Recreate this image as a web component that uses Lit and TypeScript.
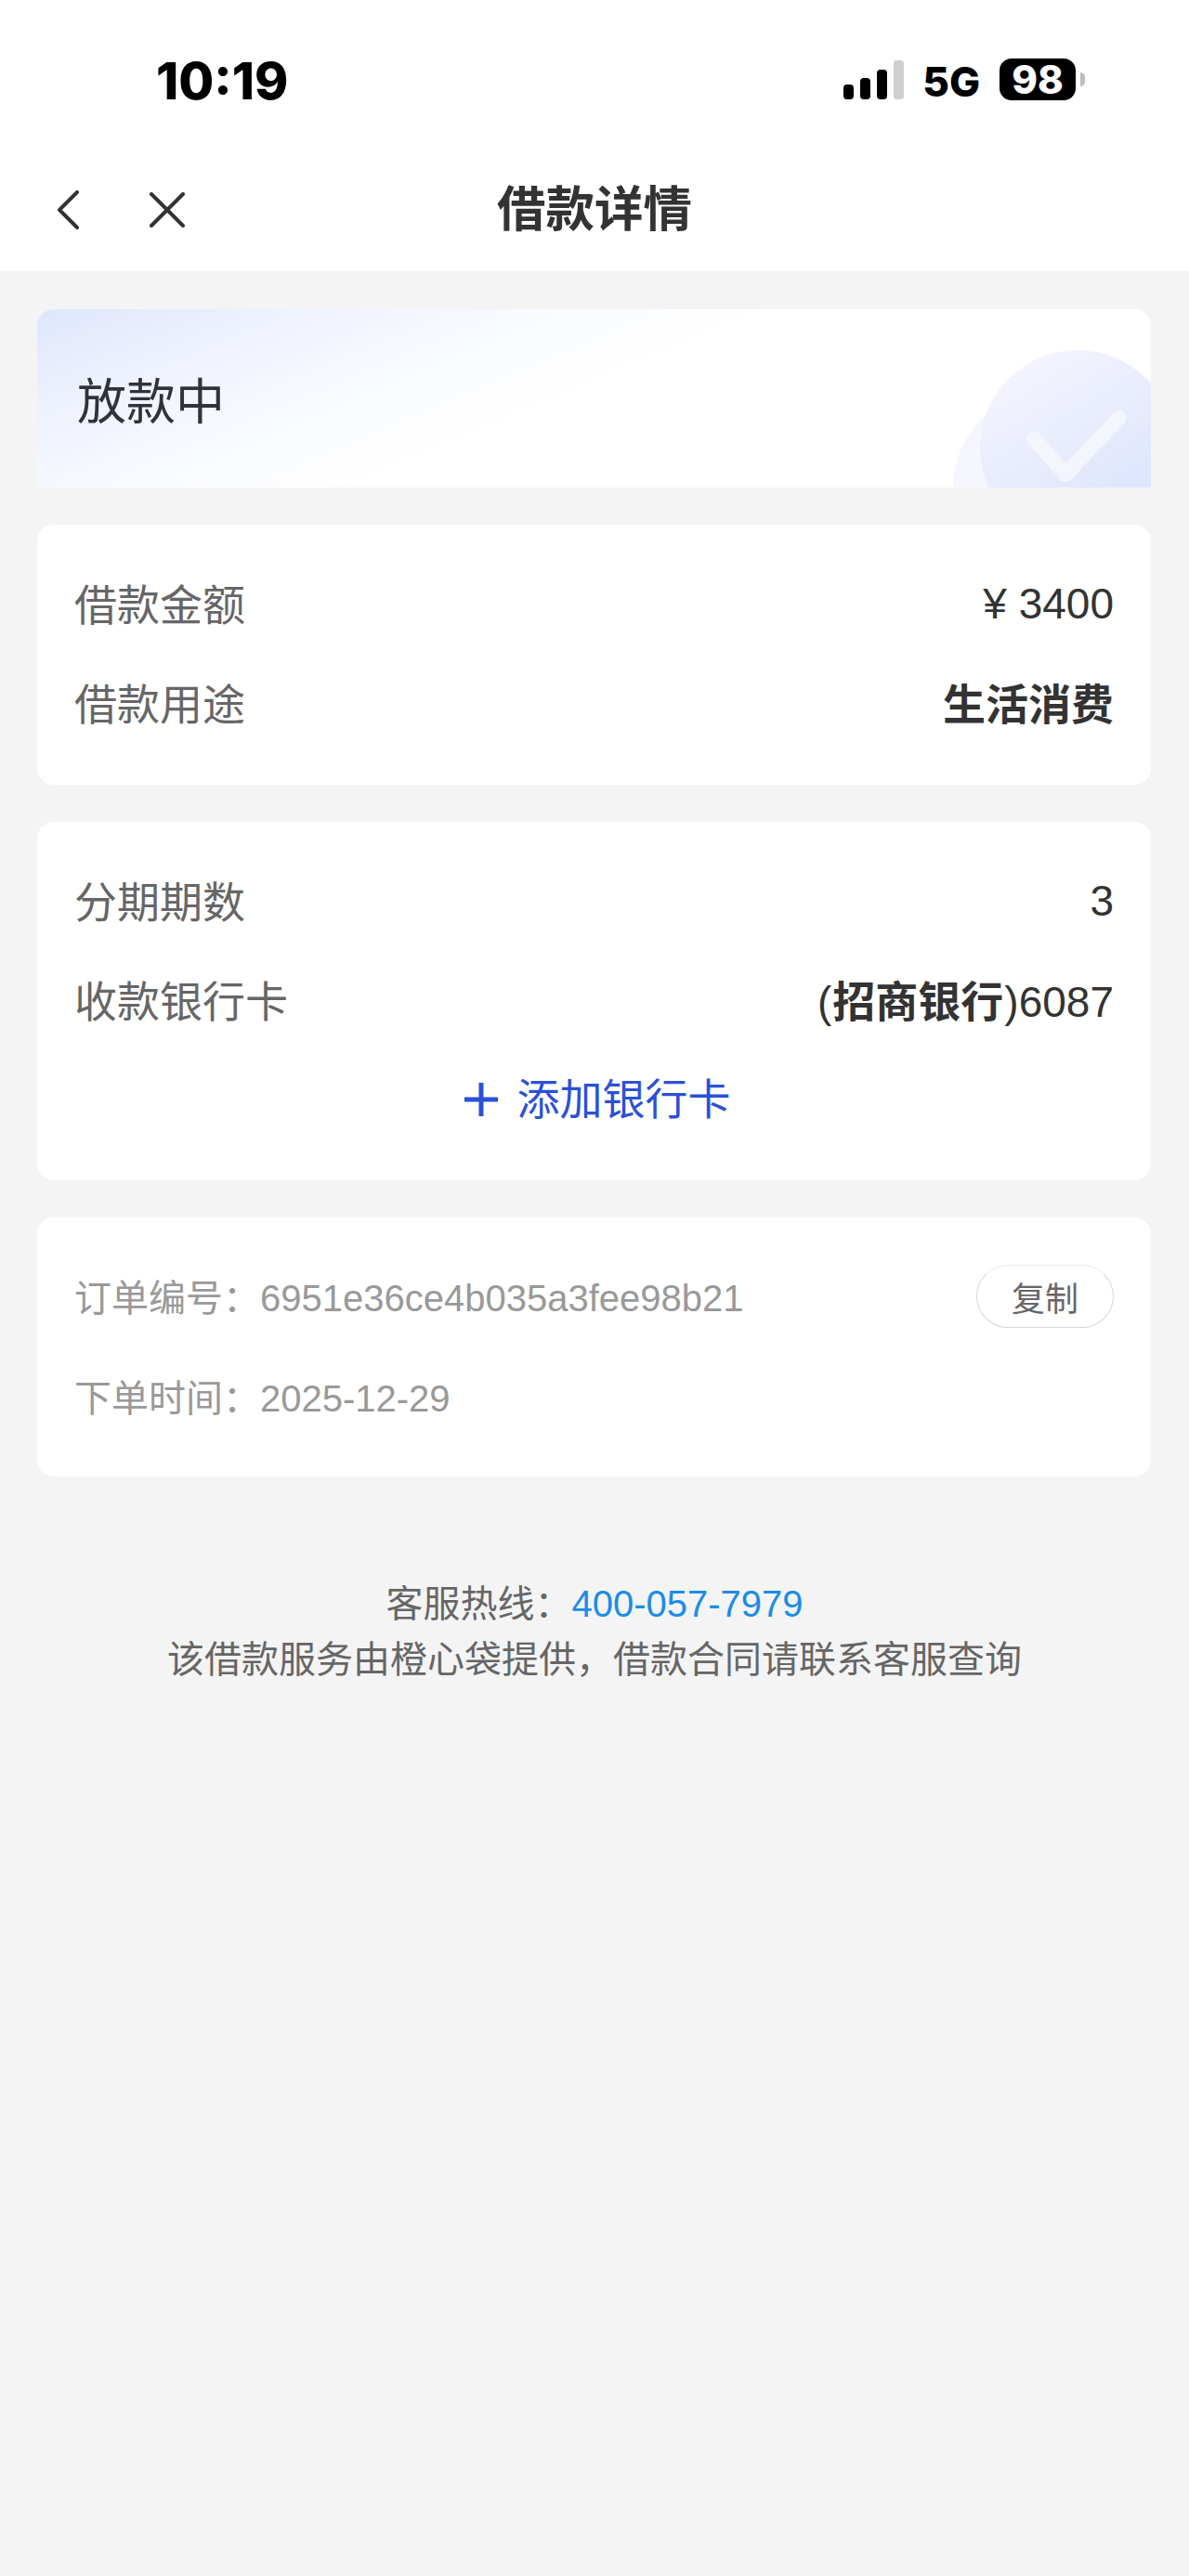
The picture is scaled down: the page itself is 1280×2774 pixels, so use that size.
import { LitElement, css, html } from "lit";
import { customElement } from "lit/decorators.js";

@customElement("app-root")
export class AppRoot extends LitElement {
  static styles = css`
    :host {
      display: block;
      width: 1280px;
      height: 2774px;
      overflow: hidden;
      background: #f4f4f4;
      font-family: "Liberation Sans", "Noto Sans CJK SC", sans-serif;
      color: #333;
    }

    .top {
      background: #fff;
      height: 292px;
    }

    .status {
      display: flex;
      align-items: center;
      height: 176px;
      padding: 0 112px 0 168px;
      color: #000;
      font-family: Inter, "Liberation Sans", sans-serif;
      font-weight: 800;
    }

    .time {
      font-size: 55px;
      line-height: 1;
      flex: 1;
      margin-top: -1px;
    }

    .signal {
      display: block;
      margin-right: 20px;
      margin-top: -5px;
    }

    .net {
      font-size: 44px;
      line-height: 1;
      margin-right: 21px;
    }

    .battery {
      display: flex;
      align-items: center;
      justify-content: center;
      width: 82px;
      height: 45px;
      margin-top: -5px;
      border-radius: 13px;
      background: #000;
      color: #fff;
      font-size: 42px;
    }

    .nub {
      width: 5px;
      height: 15px;
      margin-left: 5px;
      margin-top: -5px;
      border-radius: 0 8px 8px 0;
      background: #bdbdbd;
    }

    .nav {
      display: grid;
      grid-template-columns: 1fr auto 1fr;
      align-items: center;
      height: 116px;
      padding-bottom: 16px;
      box-sizing: border-box;
    }

    .nav-icons {
      display: flex;
      padding-left: 60px;
      gap: 75px;
      align-items: center;
    }

    .title {
      font-size: 52.5px;
      font-weight: 700;
      line-height: 60px;
      color: #333;
    }

    .content {
      display: flex;
      flex-direction: column;
      gap: 40px;
      padding: 41px 41px 0 40px;
    }

    .banner {
      position: relative;
      overflow: hidden;
      height: 192px;
      display: flex;
      align-items: center;
      padding-left: 43px;
      border-radius: 18px 18px 0 0;
      font-size: 53px;
      color: #30343a;
      background: linear-gradient(157deg, #dfe6fc 0%, #eef2fe 16%, #f9fbff 34%, #fff 48%);
    }

    .banner span {
      position: relative;
    }

    .badge {
      position: absolute;
      right: 0;
      bottom: 0;
    }

    .card {
      background: #fff;
      border-radius: 18px;
      padding: 33px 40px;
    }

    .row {
      display: flex;
      align-items: center;
      justify-content: space-between;
      box-sizing: border-box;
      height: 107px;
      padding-bottom: 8px;
      font-size: 46px;
      color: #333;
    }

    .label {
      color: #666;
    }

    .strong {
      font-weight: 700;
    }

    .bank {
      padding: 0 1px;
    }

    .num {
      margin-top: 5px;
    }

    .add {
      display: flex;
      align-items: center;
      justify-content: center;
      box-sizing: border-box;
      gap: 21px;
      height: 106px;
      padding: 0 0 10px 7px;
      font-size: 46px;
      color: #2c50d6;
    }

    .add svg {
      margin-top: 8px;
    }

    .order {
      padding: 30px 40px 33px;
    }

    .order .row {
      height: 108px;
      padding-bottom: 0;
      font-size: 40px;
      color: #999;
    }

    .copy {
      display: flex;
      align-items: center;
      justify-content: center;
      width: 148px;
      height: 68px;
      margin-top: 2px;
      box-sizing: border-box;
      border: 1.5px solid #d6d6d6;
      border-top-color: #ececec;
      border-radius: 34px;
      font-size: 36px;
      color: #666;
    }

    .footer {
      margin-top: 107px;
      text-align: center;
      font-size: 40px;
      line-height: 60px;
      color: #666;
    }

    .footer a {
      color: #1c8ce6;
      text-decoration: none;
    }
  `;

  render() {
    return html`
      <div class="top">
        <div class="status">
          <div class="time">10:19</div>
          <svg class="signal" width="65" height="42" viewBox="0 0 65 42">
            <rect x="0" y="26" width="11" height="16" rx="4" fill="#000" />
            <rect x="18" y="19" width="11" height="23" rx="4" fill="#000" />
            <rect x="36" y="10" width="11" height="32" rx="4" fill="#000" />
            <rect x="54" y="0" width="11" height="42" rx="3" fill="#cfcfcf" />
          </svg>
          <div class="net">5G</div>
          <div class="battery">98</div>
          <div class="nub"></div>
        </div>
        <div class="nav">
          <div class="nav-icons">
            <svg width="26" height="42" viewBox="0 0 26 42">
              <path d="M23 2 L4 21 L23 40" fill="none" stroke="#333" stroke-width="4" stroke-linecap="round" stroke-linejoin="round" />
            </svg>
            <svg width="38" height="38" viewBox="0 0 38 38">
              <path d="M2 2 L36 36 M36 2 L2 36" fill="none" stroke="#333" stroke-width="4" stroke-linecap="round" />
            </svg>
          </div>
          <div class="title">借款详情</div>
          <div></div>
        </div>
      </div>
      <div class="content">
        <div class="banner">
          <svg class="badge" width="220" height="150" viewBox="0 0 220 150">
            <defs>
              <linearGradient id="big" x1="0.2" y1="0" x2="0.8" y2="1">
                <stop offset="0" stop-color="#f5f5fe" />
                <stop offset="1" stop-color="#d8e1fd" />
              </linearGradient>
            </defs>
            <circle cx="111" cy="150" r="104" fill="#f5f6fe" />
            <circle cx="141" cy="107" r="105" fill="url(#big)" />
            <path d="M94 97 L128 136 L186 75" fill="none" stroke="#f4f6fe" stroke-width="16" stroke-linecap="round" stroke-linejoin="round" />
          </svg>
          <span>放款中</span>
        </div>

        <div class="card">
          <div class="row"><span class="label">借款金额</span><span class="num">¥ 3400</span></div>
          <div class="row"><span class="label">借款用途</span><span class="strong">生活消费</span></div>
        </div>

        <div class="card">
          <div class="row"><span class="label">分期期数</span><span class="num">3</span></div>
          <div class="row"><span class="label">收款银行卡</span><span>(<span class="strong bank">招商银行</span>)6087</span></div>
          <div class="add">
            <svg width="36" height="36" viewBox="0 0 36 36">
              <path d="M18 0 V36 M0 18 H36" stroke="#2c50d6" stroke-width="5" fill="none" />
            </svg>
            <span>添加银行卡</span>
          </div>
        </div>

        <div class="card order">
          <div class="row"><span>订单编号：6951e36ce4b035a3fee98b21</span><span class="copy">复制</span></div>
          <div class="row"><span>下单时间：2025-12-29</span></div>
        </div>
      </div>
      <div class="footer">
        <div>客服热线：<a>400-057-7979</a></div>
        <div>该借款服务由橙心袋提供，借款合同请联系客服查询</div>
      </div>
    `;
  }
}
